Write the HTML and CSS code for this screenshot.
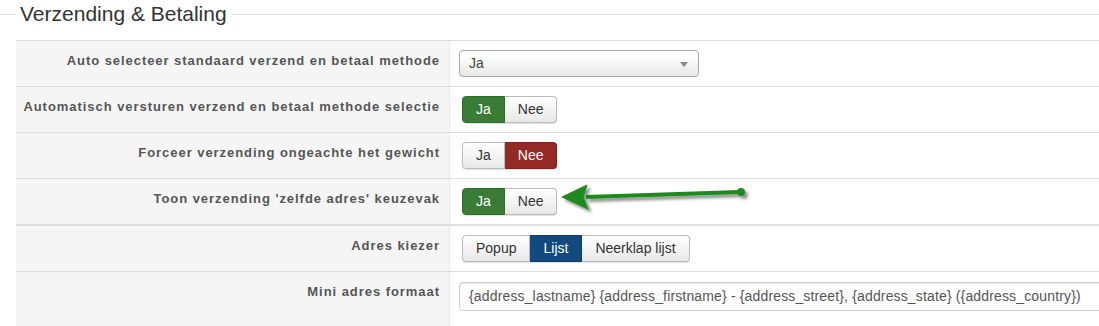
FILE: index.html
```html
<!DOCTYPE html>
<html lang="nl">
<head>
    <meta charset="UTF-8">
    <title>Verzending &amp; Betaling</title>
    <link rel="stylesheet" href="styles.css">
</head>
<body>

    <div class="legend">
        <span class="legend-line short"></span>
        <span class="legend-text">Verzending &amp; Betaling</span>
        <span class="legend-line"></span>
    </div>

    <div class="form-table">
        <div class="row">
            <div class="label">Auto selecteer standaard verzend en betaal methode</div>
            <div class="control">
                <div class="select">Ja <span class="caret"></span></div>
            </div>
        </div>
        <div class="row">
            <div class="label">Automatisch versturen verzend en betaal methode selectie</div>
            <div class="control">
                <div class="btn-group">
                    <span class="btn active-yes">Ja</span><span class="btn">Nee</span>
                </div>
            </div>
        </div>
        <div class="row">
            <div class="label">Forceer verzending ongeachte het gewicht</div>
            <div class="control">
                <div class="btn-group">
                    <span class="btn">Ja</span><span class="btn active-no">Nee</span>
                </div>
            </div>
        </div>
        <div class="row row-thick">
            <div class="label">Toon verzending 'zelfde adres' keuzevak</div>
            <div class="control">
                <div class="btn-group">
                    <span class="btn active-yes">Ja</span><span class="btn">Nee</span>
                </div>
                <!-- annotation arrow -->
                <svg class="arrow" width="200" height="40" viewBox="0 0 200 40">
                    <defs>
                        <filter id="shadow" x="-10%" y="-50%" width="130%" height="200%">
                            <feDropShadow dx="3" dy="3" stdDeviation="1.5" flood-color="#000" flood-opacity="0.45"/>
                        </filter>
                    </defs>
                    <g filter="url(#shadow)" fill="#1d8a1d" stroke="#1d8a1d">
                        <line x1="24" y1="14" x2="178" y2="9" stroke-width="4"/>
                        <polygon points="0,14 25,2 21,14 26,26" stroke-width="1"/>
                        <circle cx="179" cy="9" r="4" stroke="none"/>
                    </g>
                </svg>
            </div>
        </div>
        <div class="row">
            <div class="label">Adres kiezer</div>
            <div class="control">
                <div class="btn-group">
                    <span class="btn">Popup</span><span class="btn active-primary">Lijst</span><span class="btn">Neerklap lijst</span>
                </div>
            </div>
        </div>
        <div class="row row-last">
            <div class="label">Mini adres formaat</div>
            <div class="control clip">
                <div class="text-input">{address_lastname} {address_firstname} - {address_street}, {address_state} ({address_country})</div>
            </div>
        </div>
    </div>

</body>
</html>
```

FILE: styles.css
```css
body {
    margin: 0;
    font-family: "Liberation Sans", Arial, sans-serif;
    background: #fff;
    overflow: hidden;
    width: 1099px;
    height: 326px;
}
.legend {
    display: flex;
    align-items: center;
    height: 28px;
}
.legend-line {
    flex: 1;
    height: 1px;
    background: #e0e0e0;
}
.legend-line.short {
    flex: 0 0 16px;
}
.legend-text {
    font-size: 21px;
    color: #333;
    padding: 0 5px 0 4px;
    line-height: 28px;
}
.form-table {
    margin: 12px 0 0 16px;
    border-top: 1px solid #ddd;
}
.row {
    display: grid;
    grid-template-columns: 434px 1fr;
    border-bottom: 1px solid #ddd;
}
.row-thick {
    border-bottom: 2px solid #ddd;
}
.row-last {
    border-bottom: none;
    height: 54px;
}
.label {
    background: #f5f5f5;
    border-right: 1px solid #e8e8e8;
    text-align: right;
    font-size: 13px;
    font-weight: bold;
    letter-spacing: 0.95px;
    color: #555;
    line-height: 18px;
    padding: 11px 9px 0 0;
}
.control {
    position: relative;
    padding: 9px 0 9px 9px;
}
.control.clip {
    overflow: hidden;
}
.select {
    box-sizing: border-box;
    width: 240px;
    height: 27px;
    border: 1px solid #aaa;
    border-radius: 4px;
    background: linear-gradient(#fff 20%, #f2f2f2 60%, #e8e8e8);
    font-size: 14px;
    color: #444;
    line-height: 25px;
    padding-left: 9px;
    position: relative;
}
.caret {
    position: absolute;
    right: 10px;
    top: 11px;
    border-left: 4px solid transparent;
    border-right: 4px solid transparent;
    border-top: 5px solid #888;
}
.btn-group {
    display: inline-flex;
    margin-left: 3px;
    border-radius: 4px;
    box-shadow: 0 1px 1px rgba(0, 0, 0, 0.12);
}
.btn {
    font-size: 14px;
    line-height: 17px;
    padding: 4px 13px;
    color: #333;
    border: 1px solid #bbb;
    border-left-width: 0;
    background: linear-gradient(#fff, #e8e8e8);
}
.btn:first-child {
    border-left-width: 1px;
    border-radius: 4px 0 0 4px;
}
.btn:last-child {
    border-radius: 0 4px 4px 0;
}
.active-yes {
    background: #3a7c36;
    border-color: #2f6b2b;
    color: #fff;
}
.active-no {
    background: #942a25;
    border-color: #7e221e;
    color: #fff;
}
.active-primary {
    background: #124a7f;
    border-color: #0e3c68;
    color: #fff;
}
.arrow {
    position: absolute;
    left: 112px;
    top: 4px;
}
.text-input {
    box-sizing: border-box;
    width: 700px;
    height: 29px;
    border: 1px solid #ccc;
    border-radius: 4px;
    box-shadow: inset 0 1px 1px rgba(0, 0, 0, 0.08);
    font-size: 14px;
    letter-spacing: 0.15px;
    color: #555;
    line-height: 27px;
    padding-left: 9px;
    margin-top: 1px;
    white-space: nowrap;
}
```
